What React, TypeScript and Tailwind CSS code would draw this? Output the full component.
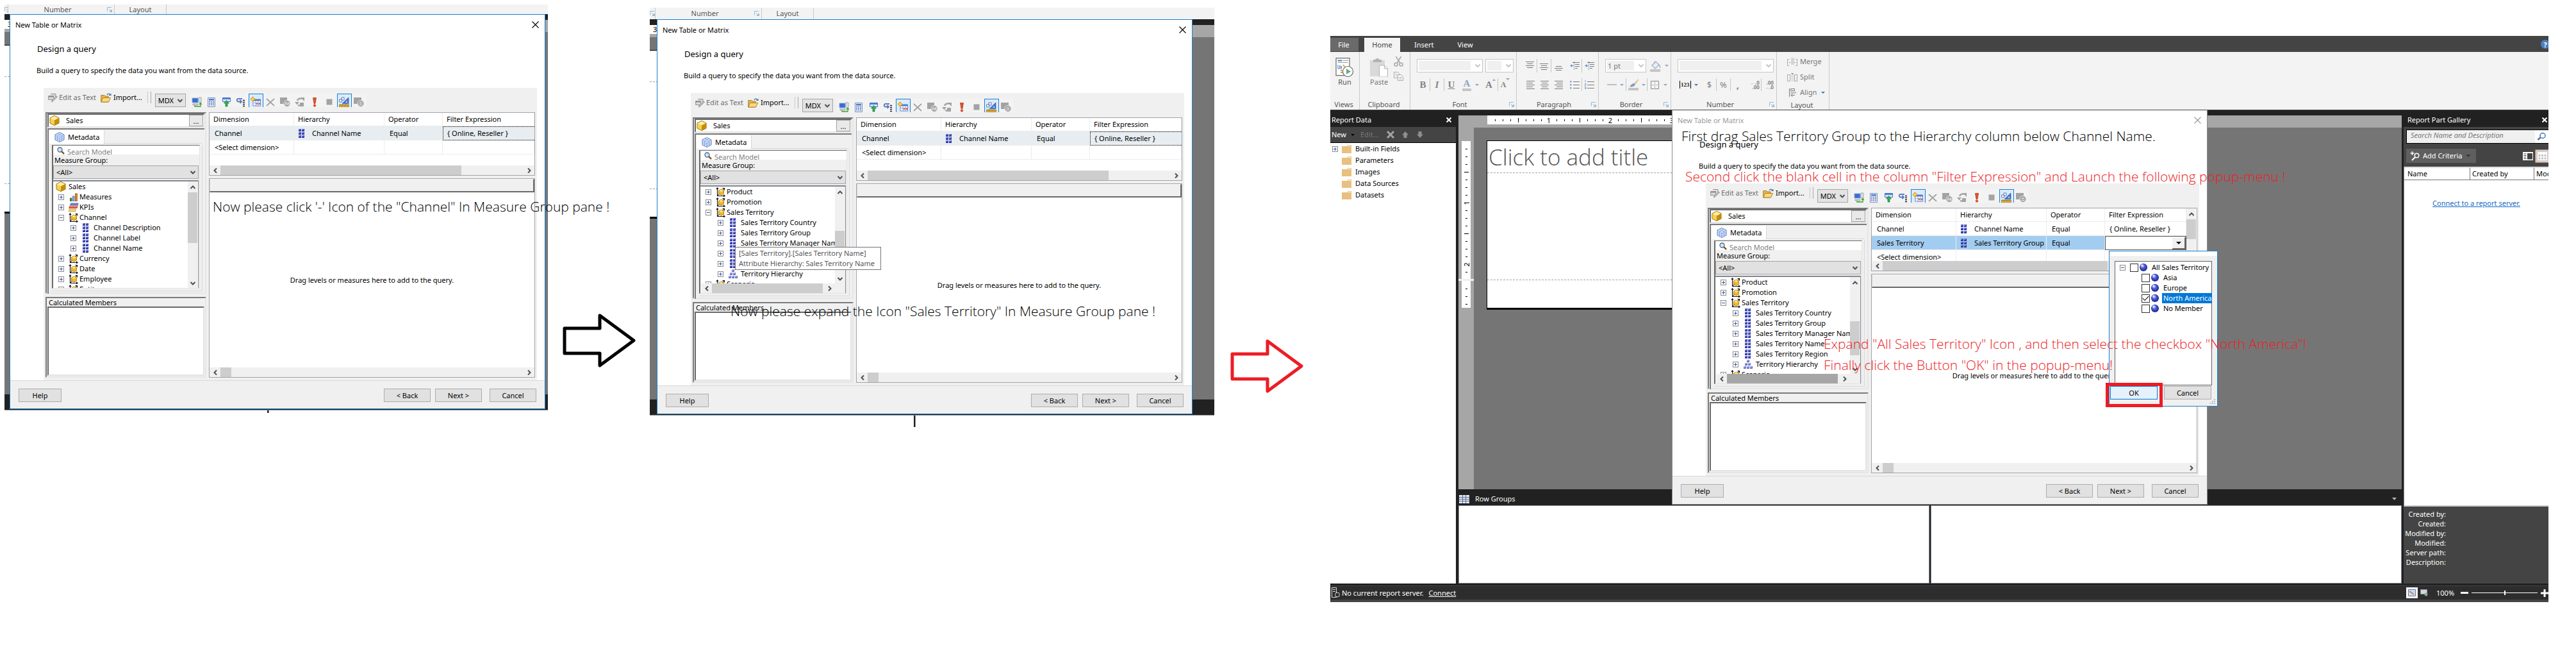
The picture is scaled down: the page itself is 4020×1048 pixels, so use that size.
import type { ReactNode } from "react";
import clsx from "clsx";

/* ---------- small glyphs ---------- */

function Chevron({ dir, className }: { dir: "up" | "down" | "left" | "right"; className?: string }) {
  const d = {
    up: "M1.5 7 5 3.5 8.5 7",
    down: "M1.5 3 5 6.5 8.5 3",
    left: "M7 1.5 3.5 5 7 8.5",
    right: "M3 1.5 6.5 5 3 8.5",
  }[dir];
  return (
    <svg viewBox="0 0 10 10" className={clsx("size-[10px] shrink-0", className)} fill="none" stroke="#505050" strokeWidth="2">
      <path d={d} />
    </svg>
  );
}

function Cube({ className }: { className?: string }) {
  return (
    <svg viewBox="0 0 16 16" className={clsx("size-4 shrink-0", className)}>
      <path d="M8 .5 15 4v8l-7 3.5L1 12V4z" fill="#f0b91e" stroke="#8a6508" />
      <path d="M1.5 4.2 8 7.5v7.4L1.5 11.8z" fill="#f7d250" />
      <path d="M8 1 14.5 4.2 8 7.5 1.5 4.2z" fill="#fff0a6" />
      <path d="M14.5 4.2 8 7.5v7.4l6.5-3.1z" fill="#c88d06" />
    </svg>
  );
}

function MetaCube() {
  return (
    <svg viewBox="0 0 16 16" className="size-4 shrink-0">
      <path d="M8 .5 15 4v8l-7 3.5L1 12V4z" fill="#e6eefc" stroke="#5578c4" />
      <path d="M1 4l7 3.5L15 4M8 7.5v8M1 6.7l7 3.5 7-3.5M1 9.4l7 3.5 7-3.5M4.5 2.3l7 3.5v8M11.5 2.3l-7 3.5v8" fill="none" stroke="#7d9ede" strokeWidth=".9" />
    </svg>
  );
}

function DimensionIcon() {
  return (
    <svg viewBox="0 0 15 15" className="size-[15px] shrink-0">
      <path d="M2.5 1v12.5H14M.8 3 2.5.8 4.2 3M12 11.8l2.2 1.7L12 15M3 13 13 2M10.500 1.500H13.500V4.500" fill="none" stroke="#111" strokeWidth="1.1" />
      <path d="M8.500 3.200 12.500 5v5L8.500 12 4.500 10V5z" fill="#f2bb22" stroke="#a06d05" strokeWidth=".8" />
      <path d="M8.500 3.700 12 5.200 8.500 7 5 5.200z" fill="#ffe98a" />
    </svg>
  );
}

function AttributeIcon() {
  return (
    <svg viewBox="0 0 9 14" className="h-[14px] w-[9px] shrink-0">
      {[0, 5, 10].map((y) => (
        <g key={y}>
          <rect x="0" y={y} width="4" height="4" fill="#2e359e" />
          <rect x="5" y={y} width="4" height="4" fill="#2e359e" />
          <rect x="0" y={y} width="3" height="2" fill="#6d78dc" />
          <rect x="5" y={y} width="3" height="2" fill="#6d78dc" />
        </g>
      ))}
    </svg>
  );
}

function HierarchyIcon() {
  const cells = [[5, 0], [2, 5], [7, 5], [0, 10], [5, 10], [10, 10]];
  return (
    <svg viewBox="0 0 14 14" className="size-[14px] shrink-0">
      {cells.map(([x, y]) => (
        <g key={`${x}-${y}`}>
          <rect x={x} y={y} width="4" height="4" fill="#6a6fc0" />
          <rect x={x} y={y} width="3" height="2" fill="#a7abe8" />
        </g>
      ))}
    </svg>
  );
}

function MeasuresIcon() {
  return (
    <svg viewBox="0 0 14 14" className="size-[14px] shrink-0">
      <rect x="1.500" y="9" width="2.500" height="4.500" fill="#35a629" stroke="#1c6b14" strokeWidth=".8" />
      <rect x="5.500" y="6" width="2.500" height="7.500" fill="#a3a9ea" stroke="#5a60ae" strokeWidth=".8" />
      <rect x="9.500" y="2" width="2.800" height="11.500" fill="#e8892a" stroke="#8e4d08" strokeWidth=".8" />
    </svg>
  );
}

function KpiIcon() {
  return (
    <svg viewBox="0 0 16 15" className="h-[15px] w-4 shrink-0">
      <path d="M3 .5h12.500v2L14 4.500H2z" fill="#5b86d6" />
      <path d="M1.500 4.500H15l-1.500 4.500H0z" fill="#d9533b" />
      <path d="M1.500 5h12v1.500h-12z" fill="#f09a84" />
      <path d="M1 10h10.500L10.500 14H0z" fill="#f0d27c" stroke="#b08a28" strokeWidth=".6" />
    </svg>
  );
}

function MemberBall() {
  return (
    <svg viewBox="0 0 12 12" className="size-3 shrink-0">
      <circle cx="6" cy="6" r="6" fill="#26309c" />
      <circle cx="5.500" cy="5" r="4.600" fill="#4453cf" />
      <circle cx="4.500" cy="3.800" r="2.800" fill="#8e9cf2" />
      <circle cx="4" cy="3.200" r="1.400" fill="#e6eaff" />
    </svg>
  );
}

function Expander({ open, label }: { open?: boolean; label: string }) {
  return (
    <button aria-label={label} className="grid size-[9px] shrink-0 place-items-center border border-[#8c8c8c] bg-white">
      <svg viewBox="0 0 5 5" className="size-[5px]" stroke="#3a57a6" strokeWidth="1">
        <path d={open ? "M0 2.500h5" : "M0 2.500h5M2.500 0v5"} />
      </svg>
    </button>
  );
}

function Launcher() {
  return (
    <svg viewBox="0 0 8 8" className="size-2 shrink-0" fill="none" stroke="#9db8d2" strokeWidth="1">
      <path d="M.5 6.500v-6H7M3 3l3 3" />
      <path d="M4 7.500h3.500V4z" fill="#9db8d2" />
    </svg>
  );
}

function Caret({ className = "text-[#8ca6c8]" }: { className?: string }) {
  return (
    <svg viewBox="0 0 6 3" className={clsx("h-[3px] w-[6px] shrink-0", className)}>
      <path d="M0 0h6L3 3z" fill="currentColor" />
    </svg>
  );
}

/* ---------- query designer toolbar ---------- */

const toolIcons: { name: string; on?: boolean; art: ReactNode }[] = [
  {
    name: "Switch source",
    art: (
      <>
        <path d="M1 2h9v7H1z" fill="#2f6fe0" stroke="#98a3b5" />
        <path d="M2 11h8v2H2zM11 1h4v8h-4z" fill="#dfe5ee" stroke="#8a93a3" strokeWidth=".8" />
        <path d="M5 13v2h9v-5M12 12l2-2.500 2 2.500" fill="none" stroke="#3aa52b" strokeWidth="1.300" />
      </>
    ),
  },
  {
    name: "Add calculated member",
    art: (
      <>
        <path d="M2.500 1.500h11v14h-11z" fill="#e8eefa" stroke="#7b92c0" />
        <path d="M4 3h8v2.500H4z" fill="#4a79d0" />
        <path d="M4 7.500h8M4 10h8M4 12.500h8" stroke="#6d7fb0" strokeWidth="1.500" strokeDasharray="2 1" />
      </>
    ),
  },
  {
    name: "Show empty cells",
    art: (
      <>
        <path d="M2.500 1.500h12v6h-12z" fill="#dbe7fb" stroke="#4473c8" />
        <path d="M3 2h11v2H3z" fill="#4f84da" />
        <path d="M8.500 5.500 12.500 10h-2.500v5H7v-5H4.500z" fill="#2fae56" stroke="#157a35" strokeWidth=".7" />
      </>
    ),
  },
  {
    name: "Auto execute",
    art: (
      <>
        <path d="M10 3H4C1 3 1 7.500 4 7.500h4M6.500 5l2.500 2.500L6.500 10" fill="none" stroke="#5b7dbd" strokeWidth="1.800" />
        <path d="M11 5.500h3M11 8.500h3M11 11.500h3M11 14.500h3" stroke="#222" strokeWidth="1.300" />
      </>
    ),
  },
  {
    name: "Show aggregations",
    on: true,
    art: (
      <>
        <path d="M4 4h11.500v10H4z" fill="#fff" stroke="#6687cc" />
        <path d="M4 4h11.500v2.500H4z" fill="#4a7bdd" />
        <path d="M4 9.500h11.500M8 6.500V14M12 6.500V14" stroke="#8da6da" />
        <path d="M8.500 10h3v2h-3zM12.500 10h3v2h-3z" fill="#e5624a" />
        <path d="M3.500 0v7M0 3.500h7" stroke="#d9a516" strokeWidth="3" />
        <path d="M3.500 1v5M1 3.500h5" stroke="#ffe27a" strokeWidth="1.200" />
      </>
    ),
  },
  {
    name: "Delete",
    art: <path d="M2 3l12 11M14 3 2 14" stroke="#a3a3a3" strokeWidth="1.800" />,
  },
  {
    name: "Query parameters",
    art: (
      <>
        <path d="M0 1h11v10H0z" fill="#a3a3a3" />
        <circle cx="11" cy="10.500" r="5" fill="#a3a3a3" stroke="#f0f0f0" strokeWidth=".8" />
        <path d="M8.500 13v-4h2v3h2V9h1.500v4" fill="none" stroke="#f0f0f0" strokeWidth=".9" />
      </>
    ),
  },
  {
    name: "Refresh",
    art: (
      <>
        <path d="M4 6a5 5 0 0 1 7-3M12 10a5 5 0 0 1-7 3" fill="none" stroke="#a3a3a3" strokeWidth="2.500" />
        <path d="M9 1h6v6zM0 8h7L3.500 12.500zM8 9h6v6H8z" fill="#a3a3a3" />
      </>
    ),
  },
  {
    name: "Run query",
    art: (
      <>
        <path d="M5.500 1.500h5L9 10.500H7z" fill="#e8502d" stroke="#b53a1c" strokeWidth=".8" />
        <circle cx="8" cy="13.500" r="1.800" fill="#e8502d" stroke="#b53a1c" strokeWidth=".6" />
      </>
    ),
  },
  { name: "Cancel query", art: <path d="M3.500 3.500h9v9h-9z" fill="#a3a3a3" /> },
  {
    name: "Design mode",
    on: true,
    art: (
      <>
        <path d="M15 1v9.500H5z" fill="#4472cf" stroke="#274f9f" strokeWidth=".6" />
        <path d="M13 6v3h-3z" fill="#cfe0ff" />
        <path d="M.7 4h4v4h-4zM4 1h4v4H4z" fill="#fff" stroke="#5577b8" />
        <path d="M.5 12h15v3.500H.5z" fill="#eab63c" stroke="#93700f" strokeWidth=".7" />
        <path d="M3 12v2M5.500 12v2M8 12v2M10.500 12v2M13 12v2" stroke="#6b5008" strokeWidth=".8" />
      </>
    ),
  },
  {
    name: "Server aggregates",
    art: (
      <>
        <path d="M0 1h12v10H0z" fill="#a3a3a3" />
        <circle cx="11" cy="10.500" r="5" fill="#a3a3a3" stroke="#f0f0f0" strokeWidth=".8" />
        <path d="M8.500 10h2v-1.500M13.500 10h-2v-1.500M8.500 12.500h5" fill="none" stroke="#f0f0f0" strokeWidth=".9" />
      </>
    ),
  },
];

function Toolbar() {
  return (
    <div className="flex h-[38px] items-start pl-[7px]">
      <div className="flex h-[30px] items-center">
        <button className="flex items-center gap-[2px] text-[#6d6d6d]">
          <svg viewBox="0 0 15 15" className="size-[15px]">
            <path d="M.7 4.500h8v6h-8zM4 1.500h8v5" fill="#dadada" stroke="#8f8f8f" />
            <path d="M.7 5h8v1.500h-8z" fill="#8f8f8f" />
            <path d="M14.500 6 8 12.500l-2.500 1.500L6.500 11 12.500 5z" fill="#c4c4c4" stroke="#808080" strokeWidth=".8" />
          </svg>
          Edit as Text
        </button>
        <button className="ml-[7px] flex items-center gap-[3px]">
          <svg viewBox="0 0 17 15" className="h-[15px] w-[17px]">
            <path d="M.7 3.500h5l1.300 1.500h5v9H.7z" fill="#e8b548" stroke="#9a6d14" strokeWidth=".8" />
            <path d="M3.500 7.500H15.500L12.500 14H.7z" fill="#fbd97a" stroke="#9a6d14" strokeWidth=".8" />
            <path d="M10 3c1-2.500 4-2.500 5 0M13 3.500h3V1" fill="none" stroke="#4c6f9f" strokeWidth="1.100" />
          </svg>
          Import...
        </button>
        <span className="ml-2 h-[18px] w-px bg-[#c9c9c9]" />
        <span className="ml-1 h-[18px] w-px bg-[#a9a9a9]" />
      </div>
      <div className="relative mt-[9px] ml-[6px]">
        <select aria-label="Query language" className="block h-[21px] w-12 appearance-none border border-[#a5a5a5] bg-[#e3e3e3] pl-1">
          <option>MDX</option>
        </select>
        <Chevron dir="down" className="pointer-events-none absolute top-[6px] right-1" />
      </div>
      <div className="mt-[9px] ml-[6px] flex bg-[#f3f3f3]">
        {toolIcons.map((t) => (
          <button
            key={t.name}
            aria-label={t.name}
            className={clsx(
              "flex h-[21px] w-[23px] items-end justify-center",
              t.on && "border border-b-0 border-[#1c7fd6] bg-[#dcebf9]",
            )}
          >
            <svg viewBox="0 0 16 16" className="size-4" fill="none">
              {t.art}
            </svg>
          </button>
        ))}
      </div>
    </div>
  );
}

/* ---------- metadata tree ---------- */

type Node = { text: string; level: 0 | 1 | 2; kind: "cube" | "measures" | "kpi" | "dim" | "attr" | "hier"; open?: boolean };

const kindIcon: Record<Node["kind"], ReactNode> = {
  cube: <Cube />,
  measures: <MeasuresIcon />,
  kpi: <KpiIcon />,
  dim: <DimensionIcon />,
  attr: <AttributeIcon />,
  hier: <HierarchyIcon />,
};

function TreeRow({ node }: { node: Node }) {
  return (
    <li className={clsx("flex h-4 items-center", node.level === 0 && "pl-1", node.level === 1 && "pl-2", node.level === 2 && "pl-[27px]")}>
      {node.level > 0 && <Expander open={node.open} label={`Toggle ${node.text}`} />}
      <span className={clsx("flex shrink-0 items-center", node.level === 0 ? "w-5" : "w-[23px] justify-center pl-[6px]")}>
        {kindIcon[node.kind]}
      </span>
      <span className={clsx("whitespace-nowrap", node.level === 1 && "pl-[1px]", node.level === 2 && "pl-1")}>{node.text}</span>
    </li>
  );
}

function ScrollThumbV({ before, thumb }: { before: string; thumb: string }) {
  return (
    <div className="flex w-[15px] shrink-0 flex-col items-center bg-[#f0f0f0]">
      <span className="grid h-[17px] place-items-center"><Chevron dir="up" /></span>
      <span className={before} />
      <span className={clsx("w-full bg-[#cdcdcd]", thumb)} />
      <span className="flex-1" />
      <span className="grid h-[15px] place-items-center"><Chevron dir="down" /></span>
    </div>
  );
}

function ScrollH({ thumb, color = "bg-[#cdcdcd]", className }: { thumb: string; color?: string; className?: string }) {
  return (
    <div className={clsx("flex h-[15px] shrink-0 items-center bg-[#f0f0f0]", className)}>
      <span className="grid w-[17px] place-items-center"><Chevron dir="left" /></span>
      <span className={clsx("h-full", color, thumb)} />
      <span className="flex-1" />
      <span className="grid w-[17px] place-items-center"><Chevron dir="right" /></span>
    </div>
  );
}

function MetadataPane({ nodes, scrolled, hColor }: { nodes: Node[]; scrolled?: boolean; hColor?: string }) {
  return (
    <section className="flex h-[283px] flex-col border-2 border-t-[#7b7b7b] border-r-[#e6e6e6] border-b-[#e6e6e6] border-l-[#7b7b7b] p-px pt-0">
      <div className="flex h-6 items-center border-t-2 border-r border-b-2 border-l-2 border-t-[#696969] border-r-[#e3e3e3] border-b-[#e3e3e3] border-l-[#696969] bg-white">
        <Cube className="ml-px" />
        <span className="ml-[10px] flex-1">Sales</span>
        <button className="mr-px h-[18px] w-[22px] border border-[#a0a0a0] bg-[#e9e9e9] leading-none">...</button>
      </div>
      <div className="mt-px flex flex-1 flex-col border-t-2 border-l-2 border-[#7b7b7b] p-px pr-0 pb-0">
        <div role="tablist" className="flex h-[21px] pr-1">
          <button role="tab" aria-selected="true" className="flex w-[86px] items-center gap-[5px] border-r border-[#d9d9d9] bg-white pl-2">
            <MetaCube />
            Metadata
          </button>
          <span className="flex-1 border-b border-[#d9d9d9]" />
        </div>
        <div className="mt-[2px] mr-[3px] mb-1 ml-1 flex-1 border-r border-b border-[#d9d9d9] pr-[3px] pb-[3px]">
          <div className="border-t border-r border-b border-l-2 border-t-[#696969] border-r-[#e3e3e3] border-b-[#e3e3e3] border-l-[#696969]">
            <label className="flex h-[14px] items-start overflow-hidden bg-white pl-[6px]">
              <svg viewBox="0 0 12 12" className="mt-[2px] size-3 shrink-0">
                <circle cx="4.500" cy="4.500" r="3.500" fill="#cfe3f7" stroke="#4c6a91" strokeWidth="1.300" />
                <path d="M7 7l4 4" stroke="#7a4b18" strokeWidth="2.400" />
              </svg>
              <input aria-label="Search Model" placeholder="Search Model" className="mt-[2px] ml-1 h-4 w-40 leading-4 placeholder:text-[#808080]" />
            </label>
            <p className="flex h-[17px] items-center pl-[2px]">Measure Group:</p>
            <div className="relative mr-px">
              <select aria-label="Measure Group" className="block h-[21px] w-full appearance-none border border-[#a5a5a5] bg-[#e1e1e1] pl-1">
                <option>{"<All>"}</option>
              </select>
              <Chevron dir="down" className="pointer-events-none absolute top-[6px] right-1" />
            </div>
            <div className="mt-[2px] mr-px flex h-[168px] border-t-2 border-r border-[#828790] bg-white">
              <div className="flex min-w-0 flex-1 flex-col">
                <ul className="min-h-0 flex-1 overflow-hidden">
                  {nodes.map((n) => (
                    <TreeRow key={n.text} node={n} />
                  ))}
                </ul>
                {scrolled && <ScrollH thumb="w-[173px]" color={hColor} className="ml-px" />}
              </div>
              <div className={clsx("flex pr-px", scrolled && "bg-[#f0f0f0] pb-[15px]")}>
                {scrolled ? <ScrollThumbV before="h-[52px]" thumb="h-[53px]" /> : <ScrollThumbV before="h-0" thumb="h-[79px]" />}
              </div>
            </div>
          </div>
        </div>
      </div>
    </section>
  );
}

function CalculatedMembers() {
  return (
    <section className="mt-[5px] flex h-[126px] flex-col border-2 border-t-[#7b7b7b] border-r-[#e6e6e6] border-b-[#e6e6e6] border-l-[#7b7b7b]">
      <h3 className="flex h-[13px] items-center pl-[3px]">Calculated Members</h3>
      <div className="mx-px mb-px flex-1 border-2 border-t-[#696969] border-r-[#e3e3e3] border-b-[#e3e3e3] border-l-[#696969] bg-white" />
    </section>
  );
}

/* ---------- dimension filter grid ---------- */

type FilterRow = { dim: string; hier?: string; op?: string; expr?: string; state?: "soft" | "selected" };

function FilterGrid({ rows, editing }: { rows: FilterRow[]; editing?: boolean }) {
  const cell = "overflow-hidden border-r border-b border-[#ececec] p-0 whitespace-nowrap";
  return (
    <div className="flex h-[99px] flex-col border border-[#a3a3ab] bg-white">
      <div className="flex h-[82px] overflow-hidden">
        <div className="min-w-0 flex-1">
          <table className="w-full table-fixed border-separate border-spacing-0 text-left">
            <colgroup>
              <col className="w-[132px]" />
              <col className="w-[141px]" />
              <col className="w-[91px]" />
              <col />
            </colgroup>
            <thead>
              <tr className="h-[21px]">
                {["Dimension", "Hierarchy", "Operator", "Filter Expression"].map((h) => (
                  <th key={h} className={clsx(cell, "pl-[6px] font-normal")}>{h}</th>
                ))}
              </tr>
            </thead>
            <tbody>
              {rows.map((r) => (
                <tr key={r.dim} className={clsx("h-[22px]", r.state === "soft" && "bg-[#e7edf1]", r.state === "selected" && "bg-[#a3cdf0]")}>
                  <td className={clsx(cell, "pl-2")}>{r.dim}</td>
                  <td className={cell}>
                    {r.hier && (
                      <span className="flex items-center gap-3 pl-[7px]">
                        <AttributeIcon />
                        {r.hier}
                      </span>
                    )}
                  </td>
                  <td className={clsx(cell, "pl-2")}>{r.op}</td>
                  {r.state === "selected" ? (
                    <td className="p-0">
                      <div className="flex h-[22px] border border-[#555] bg-white">
                        <input aria-label="Filter Expression" className="min-w-0 flex-1 px-1" />
                        <button aria-label="Open member list" className="grid w-[22px] place-items-center border-2 border-t-[#f8f8f8] border-r-[#696969] border-b-[#696969] border-l-[#f8f8f8] bg-[#f0f0f0]">
                          <svg viewBox="0 0 8 4" className="h-1 w-2"><path d="M0 0h8L4 4z" /></svg>
                        </button>
                      </div>
                    </td>
                  ) : (
                    <td className={clsx(r.state === "soft" ? "overflow-hidden border border-r-0 border-dotted border-black p-0 pl-[6px] whitespace-nowrap" : clsx(cell, "pl-[7px]"))}>
                      {r.expr}
                    </td>
                  )}
                </tr>
              ))}
            </tbody>
          </table>
        </div>
        {editing && <div className="flex pr-px"><ScrollThumbV before="h-0" thumb="h-[31px]" /></div>}
      </div>
      <ScrollH thumb={editing ? "w-[351px]" : "w-[376px]"} />
    </div>
  );
}

/* ---------- wizard dialog ---------- */

function DialogButton({ children, className }: { children: ReactNode; className?: string }) {
  return <button className={clsx("h-[21px] border border-[#adadad] bg-[#e1e1e1]", className)}>{children}</button>;
}

function WizardDialog({
  nodes,
  rows,
  scrolled,
  editing,
}: {
  nodes: Node[];
  rows: FilterRow[];
  scrolled?: boolean;
  editing?: boolean;
}) {
  return (
    <section
      role="dialog"
      aria-label="New Table or Matrix"
      className={clsx("border bg-white text-black", editing ? "border-[#8a8a8a] border-t-[#444]" : "border-[#1c80cc]")}
    >
      <header className={clsx("flex h-[31px] items-center justify-between pr-[9px] pl-2", editing && "text-[#999]")}>
        <h2>New Table or Matrix</h2>
        <button aria-label="Close">
          <svg viewBox="0 0 11 11" className="size-[11px]" fill="none" stroke="currentColor" strokeWidth="1.100">
            <path d="M.5.5l10 10M10.500.5l-10 10" />
          </svg>
        </button>
      </header>
      <h3 className="flex h-[44px] items-center pl-[42px] text-[13px]">Design a query</h3>
      <p className="flex h-6 items-center pl-[41px]">Build a query to specify the data you want from the data source.</p>
      <div className="mt-[15px] mr-3 ml-[52px] bg-[#f0f0f0]">
        <Toolbar />
        <div className="flex gap-1 px-[3px] pb-1">
          <div className="w-[251px] shrink-0">
            <MetadataPane nodes={nodes} scrolled={scrolled} hColor={editing ? "bg-[#a6a6a6]" : undefined} />
            <CalculatedMembers />
          </div>
          <div className="flex min-w-0 flex-1 flex-col gap-1">
            <FilterGrid rows={rows} editing={editing} />
            <div className="flex h-[311px] flex-col border border-[#a3a3ab] bg-white">
              <div className="h-[21px] border-t border-r-2 border-b-2 border-l border-t-[#f8f8f8] border-r-[#696969] border-b-[#696969] border-l-[#d0d0d0] bg-[#f0f0f0]" />
              <p className="flex flex-1 items-center justify-center">Drag levels or measures here to add to the query.</p>
              <ScrollH thumb="w-[17px]" />
            </div>
          </div>
        </div>
      </div>
      <footer className="flex h-[44px] border-t border-[#d9d9d9] bg-[#f0f0f0] px-[13px] pt-3">
        <DialogButton className="mr-auto w-[67px]">Help</DialogButton>
        <DialogButton className="w-[73px]">{"< Back"}</DialogButton>
        <DialogButton className="ml-[7px] w-[73px]">{"Next >"}</DialogButton>
        <DialogButton className="ml-3 w-[73px]">Cancel</DialogButton>
      </footer>
    </section>
  );
}

/* ---------- slice of the editor visible behind steps one and two ---------- */

function Backdrop({ ribbon, lead }: { ribbon: string; lead: string }) {
  return (
    <div className="absolute inset-0 flex flex-col">
      <div className={clsx("flex items-center bg-[#f3f3f3] text-[#555]", ribbon)}>
        <span className={clsx("flex h-full items-center overflow-hidden border-r border-[#c9c9c9]", lead)}><Launcher /></span>
        <span className="flex h-full w-[166px] items-center border-r border-[#c9c9c9] pr-[3px]">
          <span className="flex-1 text-center">Number</span>
          <Launcher />
        </span>
        <span className="flex h-full w-[81px] items-center justify-center border-r border-[#c9c9c9]">Layout</span>
      </div>
      <div className="h-[9px] bg-[#212121]" />
      <div className="flex flex-1">
        <div className="flex flex-1 flex-col">
          <div className="h-[14px] overflow-hidden bg-white pl-[5px] leading-[14px]">3</div>
          <div className="h-[5px] bg-[#a6a6a6]" />
          <div className="h-5 bg-[#757575]" />
          <div className="h-[50px] border-t border-b border-t-black border-b-[#a0a0a0] bg-white [border-bottom-style:dashed]" />
          <div className="h-[167px] border-b border-dashed border-[#a0a0a0] bg-white" />
          <div className="h-[43px] bg-white" />
          <div className="h-[3px] bg-black" />
          <div className="flex-1 bg-[#757575]" />
        </div>
        <div className="flex flex-1 flex-col">
          <div className="h-[19px] bg-[#a6a6a6]" />
          <div className="flex-1 bg-[#757575]" />
        </div>
      </div>
      <div className="h-[25px] border-b border-[#8a8a8a] bg-[#212121]" />
    </div>
  );
}

function Annotation({ children, className }: { children: ReactNode; className: string }) {
  return (
    <p className={clsx("absolute z-20 font-['Open_Sans',sans-serif] text-[21px] leading-7 font-light whitespace-nowrap", className)}>
      {children}
    </p>
  );
}

function StepArrow({ className }: { className: string }) {
  return (
    <svg viewBox="0 0 114 84" className={clsx("h-[84px] w-[114px]", className)} fill="none" stroke="currentColor" strokeWidth="5" strokeLinejoin="round">
      <path d="M3 23h55V3l53 39-53 39V62H3z" />
    </svg>
  );
}

/* ---------- Report Builder window ---------- */

function Combo({ label, className, value = "" }: { label: string; className: string; value?: string }) {
  return (
    <span className={clsx("relative block", className)}>
      <select aria-label={label} className="block h-[21px] w-full appearance-none border border-[#c6c6c6] bg-[linear-gradient(#f0f0f0,#f0f0f0)] bg-[length:calc(100%-20px)_15px] bg-[position:2px_2px] bg-no-repeat bg-white pl-[3px] text-[#777]">
        <option>{value}</option>
      </select>
      <svg viewBox="0 0 8 5" className="pointer-events-none absolute top-2 right-1 h-[5px] w-2" fill="none" stroke="#a9a9a9" strokeWidth="1.200">
        <path d="M.5.5 4 4.200 7.500.5" />
      </svg>
    </span>
  );
}

function RibbonGroup({ label, width, launcher, children }: { label: string; width: string; launcher?: boolean; children: ReactNode }) {
  return (
    <section className={clsx("flex shrink-0 flex-col border-r border-[#c9c9c9]", width)}>
      <div className="flex-1">{children}</div>
      <h3 className="flex h-4 items-center pr-[3px]">
        <span className="flex-1 text-center">{label}</span>
        {launcher && <Launcher />}
      </h3>
    </section>
  );
}

function RibbonCell({ label, sep, width = "w-[22px]", children }: { label: string; sep?: boolean; width?: string; children: ReactNode }) {
  return (
    <button aria-label={label} className={clsx("flex h-full shrink-0 items-center justify-center text-[#848484]", width, sep && "border-r border-[#c6c6c6]")}>
      {children}
    </button>
  );
}

function Lines({ rows, bullets }: { rows: [number, number, number][]; bullets?: "dot" | "num" | "out" | "in" }) {
  return (
    <svg viewBox="0 0 15 14" className="h-[14px] w-[15px]">
      {rows.map(([x, y, w]) => (
        <rect key={y} x={x} y={y} width={w} height="1" fill="#7a7a7a" />
      ))}
      {bullets === "dot" && <path d="M0 1h2.500v2.500H0zM0 6h2.500v2.500H0zM0 11h2.500v2.500H0z" fill="#8ca6c8" />}
      {bullets === "num" && <path d="M1 0v3.500M0 5.500h2v1.500H0v1.500h2M0 10.500h2v3H0M0 12h2" fill="none" stroke="#8ca6c8" />}
      {bullets === "out" && <path d="M0 6.500 3.500 4v2h2v1h-2v2z" fill="#6f94c4" />}
      {bullets === "in" && <path d="M5.500 6.500 2 4v2H0v1h2v2z" fill="#6f94c4" />}
      {(bullets === "out" || bullets === "in") && <path d="M6.500 0v14" stroke="#7a7a7a" strokeDasharray="1 1" />}
    </svg>
  );
}

function Ribbon() {
  const full: [number, number, number][] = [[1, 1, 13], [1, 4, 10], [1, 7, 13], [1, 10, 10], [1, 13, 13]];
  return (
    <div className="flex h-[90px] bg-[#f3f3f3] text-[#555]">
      <RibbonGroup label="Views" width="w-[46px]">
        <button className="mx-auto flex flex-col items-center pt-[9px]">
          <svg viewBox="0 0 29 30" className="h-[30px] w-[29px]" fill="none">
            <path d="M1 .7h21v27H1z" fill="#fff" stroke="#6a6a6a" strokeWidth="1.200" />
            <path d="M3.500 4.500h7" stroke="#4a82bd" strokeWidth="2" />
            <path d="M12 4.500h8M3.500 7.500h16" stroke="#9a9a9a" />
            <path d="M4 11v6h6" stroke="#4a82bd" />
            <path d="M7 12v4M9.500 13v3" stroke="#4a82bd" strokeWidth="1.500" />
            <path d="M12 11l4 5M8 20h3M8 23h4" stroke="#e3a04a" strokeWidth="2" />
            <circle cx="19.500" cy="21.500" r="8" fill="#fff" stroke="#6a6a6a" strokeWidth="1.200" />
            <path d="M17 17l7 4.500-7 4.500z" fill="#6aa790" />
          </svg>
          Run
        </button>
      </RibbonGroup>
      <RibbonGroup label="Clipboard" width="w-[79px]">
        <div className="flex gap-[9px] pt-[7px] pl-4">
          <button className="flex flex-col items-center pt-[2px] text-[#777]">
            <svg viewBox="0 0 28 30" className="h-[30px] w-7" fill="none">
              <path d="M0 4h23v25H0z" fill="#d9d9d9" />
              <path d="M5 3h3a4 4 0 0 1 7 0h3v4H5z" fill="#b3b3b3" />
              <path d="M14.500 12h8l5 5v13h-13z" fill="#fff" stroke="#b3b3b3" />
              <path d="M22.500 12v5h5" stroke="#b3b3b3" />
            </svg>
            Paste
          </button>
          <div className="flex flex-col gap-2">
            <button aria-label="Cut">
              <svg viewBox="0 0 15 16" className="h-4 w-[15px]" fill="none" stroke="#a9a9a9" strokeWidth="1.600">
                <path d="M3.500 0 9.500 10M11.500 0l-6 10" />
                <circle cx="3.500" cy="12.500" r="2.500" />
                <circle cx="11.500" cy="12.500" r="2.500" />
              </svg>
            </button>
            <button aria-label="Copy">
              <svg viewBox="0 0 15 14" className="h-[14px] w-[15px]" fill="#f8f8f8" stroke="#a9a9a9">
                <path d="M.5.5h6l2 2v7h-8z" />
                <path d="M6.500 4.500h5l3 3v6h-8z" />
                <path d="M8.500 8.500h4M8.500 11h4M2.500 3.500h3M2.500 6h3" />
              </svg>
            </button>
          </div>
        </div>
      </RibbonGroup>
      <RibbonGroup label="Font" width="w-[166px]" launcher>
        <div className="flex gap-1 pt-[11px] pl-[10px]">
          <Combo label="Font family" className="w-[103px]" />
          <Combo label="Font size" className="w-[44px]" />
        </div>
        <div className="mt-[9px] flex h-5 items-center pl-[9px] font-['Liberation_Serif'] text-[15px] font-bold">
          <RibbonCell label="Bold" sep>B</RibbonCell>
          <RibbonCell label="Italic" sep><i>I</i></RibbonCell>
          <RibbonCell label="Underline"><span className="underline">U</span></RibbonCell>
          <RibbonCell label="Font color" width="w-[26px]">
            <span className="border-b-4 border-[#c4c4c4] px-[2px] leading-4 text-[#8fa3c6]">A</span>
          </RibbonCell>
          <Caret className="text-[#8ca6c8]" />
          <RibbonCell label="Grow font" width="ml-[7px] w-[23px]" sep>
            A<span className="self-start"><svg viewBox="0 0 5 3" className="mt-px h-[3px] w-[5px]"><path d="M0 3h5L2.500 0z" fill="#8ca6c8" /></svg></span>
          </RibbonCell>
          <RibbonCell label="Shrink font">
            <span className="text-xs">A</span><span className="self-start"><Caret /></span>
          </RibbonCell>
        </div>
      </RibbonGroup>
      <RibbonGroup label="Paragraph" width="w-[128px]" launcher>
        <div className="mt-[11px] flex h-[21px] items-center pl-[10px]">
          <RibbonCell label="Top" sep><Lines rows={[[1, 0, 13], [3, 3, 9], [1, 6, 13], [3, 9, 9]]} /></RibbonCell>
          <RibbonCell label="Middle" sep><Lines rows={[[1, 3, 13], [3, 6, 9], [1, 9, 13], [3, 12, 9]]} /></RibbonCell>
          <RibbonCell label="Bottom"><Lines rows={[[3, 7, 9], [1, 10, 13], [3, 13, 9]]} /></RibbonCell>
          <span className="w-1" />
          <RibbonCell label="Decrease indent" sep><Lines rows={[[4, 1, 11], [8, 4, 7], [8, 7, 7], [8, 10, 4]]} bullets="out" /></RibbonCell>
          <RibbonCell label="Increase indent"><Lines rows={[[4, 1, 11], [8, 4, 7], [8, 7, 7], [8, 10, 4]]} bullets="in" /></RibbonCell>
        </div>
        <div className="mt-[9px] flex h-5 items-center pl-[10px]">
          <RibbonCell label="Align left"><Lines rows={full} /></RibbonCell>
          <RibbonCell label="Center"><Lines rows={full.map(([, y, w]) => [w === 13 ? 1 : 3, y, w === 13 ? 13 : 9])} /></RibbonCell>
          <RibbonCell label="Align right"><Lines rows={full.map(([, y, w]) => [14 - w, y, w])} /></RibbonCell>
          <span className="w-1" />
          <RibbonCell label="Bullets" sep><Lines rows={[[5, 2, 10], [5, 7, 10], [5, 12, 10]]} bullets="dot" /></RibbonCell>
          <RibbonCell label="Numbering"><Lines rows={[[4, 2, 11], [4, 7, 11], [4, 12, 11]]} bullets="num" /></RibbonCell>
        </div>
      </RibbonGroup>
      <RibbonGroup label="Border" width="w-[113px]" launcher>
        <div className="flex items-center pt-[11px] pl-[10px]">
          <Combo label="Border width" className="w-16" value="1 pt" />
          <RibbonCell label="Fill" width="ml-[3px] w-[22px]">
            <svg viewBox="0 0 17 18" className="h-[18px] w-[17px]" fill="none">
              <path d="M3 8l6-6 5 5-6 6z" fill="#e9eef5" stroke="#9aabc4" strokeWidth="1.200" />
              <path d="M7 5V1.500M14 7c2 2 2 4 1 5" stroke="#9aabc4" strokeWidth="1.200" />
              <path d="M0 14h16v4H0z" fill="#c4c4c4" />
            </svg>
          </RibbonCell>
          <span className="ml-1"><Caret /></span>
        </div>
        <div className="mt-[9px] flex h-5 items-center pl-[9px]">
          <RibbonCell label="Border style" width="w-[22px]"><svg viewBox="0 0 15 2" className="h-[2px] w-[15px]"><path d="M0 1h15" stroke="#8a8a8a" /></svg></RibbonCell>
          <span className="flex h-full w-3 items-center border-r border-[#c6c6c6] pl-[2px]"><Caret /></span>
          <RibbonCell label="Border color">
            <svg viewBox="0 0 17 18" className="h-[18px] w-[17px]" fill="none">
              <path d="M16 0 9 7l2 2 5-7z" fill="#dcc28c" />
              <path d="M9 7c-3 0-5 3-7 5 3 1 8 0 9-3z" fill="#7e9cc8" />
              <path d="M0 14h16v4H0z" fill="#c4c4c4" />
            </svg>
          </RibbonCell>
          <span className="flex h-full w-[11px] items-center border-r border-[#c6c6c6] pl-[2px]"><Caret /></span>
          <RibbonCell label="Borders">
            <svg viewBox="0 0 13 13" className="size-[13px]" fill="none" stroke="#8a8a8a">
              <path d="M.5.5h12v12H.5z" />
              <path d="M6.500 2v10M2 6.500h10" strokeDasharray="1 1" />
            </svg>
          </RibbonCell>
          <span className="ml-[3px]"><Caret /></span>
        </div>
      </RibbonGroup>
      <RibbonGroup label="Number" width="w-[165px]" launcher>
        <div className="pt-[11px] pl-[10px]">
          <Combo label="Number format" className="w-[150px]" />
        </div>
        <div className="mt-[9px] flex h-5 items-center pl-[13px]">
          <span className="flex h-3 items-center border-x border-black px-[1px] font-['Liberation_Serif'] text-[9px] font-bold text-[#222]">123</span>
          <span className="ml-[5px]"><Caret className="text-[#3f76b8]" /></span>
          <span className="w-2" />
          <RibbonCell label="Currency" sep><span className="text-[13px]">$</span></RibbonCell>
          <RibbonCell label="Percent" sep><span className="text-[13px]">%</span></RibbonCell>
          <RibbonCell label="Thousands"><span className="text-[15px] font-bold">,</span></RibbonCell>
          <RibbonCell label="Increase decimals" width="ml-[6px] w-5" sep>
            <span className="text-right text-[8px] leading-[7px] font-bold"><span className="text-[#7aa0d0]">←</span>.0<br />.00</span>
          </RibbonCell>
          <RibbonCell label="Decrease decimals" width="w-[23px]">
            <span className="text-right text-[8px] leading-[7px] font-bold">.00<br /><span className="text-[#7aa0d0]">→</span>.0</span>
          </RibbonCell>
        </div>
      </RibbonGroup>
      <RibbonGroup label="Layout" width="w-[82px]">
        <div className="flex flex-col pt-[3px] pl-4 text-[#777]">
          <button className="flex h-6 items-center gap-1">
            <svg viewBox="0 0 16 13" className="h-[13px] w-4" fill="none" stroke="#a9a9a9"><path d="M3 2.500H.5v10H3M13 2.500h2.500v10H13M2.500 7.500h3M13.500 7.500h-3" /><path d="M6 0h5v11H6z" fill="#d5d5d5" stroke="none" /></svg>
            Merge
          </button>
          <button className="flex h-6 items-center gap-1">
            <svg viewBox="0 0 16 13" className="h-[13px] w-4" fill="none" stroke="#a9a9a9"><path d="M.5 2.500h4v10h-4zM11.500 2.500h4v10h-4z" /><path d="M6 2h5v11H6z" fill="#e2e2e2" stroke="none" /><path d="M6 0h4L8 2.500z" fill="#8a8a8a" stroke="none" /></svg>
            Split
          </button>
          <button className="flex h-6 items-center gap-1">
            <svg viewBox="0 0 16 13" className="h-[13px] w-4" fill="none" stroke="#7a7a7a"><path d="M3.500 0v13M5.500.5h6v3h-6zM6 10.500h6M8.500 8 6 10.500 8.500 13" /><path d="M5 5h9v3H5z" fill="#c4c4c4" stroke="none" /></svg>
            Align
            <Caret className="ml-[3px] text-[#3f76b8]" />
          </button>
        </div>
      </RibbonGroup>
    </div>
  );
}

function RulerTicks({ count, vertical }: { count: number; vertical?: boolean }) {
  return (
    <div className={clsx("flex", vertical ? "w-full flex-col pt-[6px]" : "h-full pl-[6px]")}>
      {Array.from({ length: count }, (_, i) => i + 1).map((k) => (
        <span key={k} className={clsx("flex shrink-0 items-center justify-center", vertical ? "h-3 w-full" : "h-full w-3")}>
          {k % 8 === 0 ? (
            <span className={clsx("text-[11px] leading-none", vertical && "-rotate-90")}>{k / 8}</span>
          ) : (
            <span
              className={clsx(
                "bg-black",
                vertical ? (k % 4 === 0 ? "h-px w-[7px]" : "h-px w-[3px]") : k % 4 === 0 ? "h-[7px] w-px" : "h-[3px] w-px",
              )}
            />
          )}
        </span>
      ))}
    </div>
  );
}

function ReportDataPanel() {
  return (
    <aside className="flex w-[196px] shrink-0 flex-col bg-white text-black">
      <h2 className="flex h-[26px] items-center justify-between bg-[#212121] pt-1 pr-[7px] pl-[2px] text-white">
        Report Data
        <button aria-label="Close Report Data">
          <svg viewBox="0 0 8 8" className="size-2" stroke="#fff" strokeWidth="2"><path d="M.5.5l7 7M7.500.5l-7 7" /></svg>
        </button>
      </h2>
      <div className="flex h-[25px] items-center border-b border-black bg-[#444] pl-[2px] text-white">
        <button className="flex items-center gap-[7px]">New <Caret className="text-black" /></button>
        <button className="ml-[9px] text-[#777]">Edit...</button>
        <button aria-label="Delete" className="ml-3">
          <svg viewBox="0 0 12 12" className="size-3" stroke="#a3a3a3" strokeWidth="3"><path d="M1 1l10 10M11 1 1 11" /></svg>
        </button>
        <button aria-label="Move up" className="ml-3">
          <svg viewBox="0 0 10 10" className="size-[10px]" fill="#8f8f8f"><path d="M5 0l5 5.500H7.500V10h-5V5.500H0z" /></svg>
        </button>
        <button aria-label="Move down" className="ml-[13px]">
          <svg viewBox="0 0 10 10" className="size-[10px]" fill="#8f8f8f"><path d="M5 10l5-5.500H7.500V0h-5v4.500H0z" /></svg>
        </button>
      </div>
      <ul>
        {["Built-in Fields", "Parameters", "Images", "Data Sources", "Datasets"].map((t, i) => (
          <li key={t} className="flex h-[18px] items-center">
            <span className="w-[18px] pl-[3px]">{i === 0 && <Expander label="Expand Built-in Fields" />}</span>
            <svg viewBox="0 0 15 13" className="h-[13px] w-[15px]">
              <path d="M0 2h8l1.500-2H15v13H0z" fill="#e9c07f" />
              <path d="M9.500 1.500H14" stroke="#fff" />
            </svg>
            <span className="ml-[6px]">{t}</span>
          </li>
        ))}
      </ul>
    </aside>
  );
}

function DesignSurface() {
  return (
    <main className="flex min-w-0 flex-1 flex-col border-l-4 border-[#212121] pt-2">
      <div className="flex h-[583px] flex-col bg-[#757575]">
        <div className="h-[19px] bg-[#a6a6a6] pl-[45px]">
          <div className="h-[14px] w-[1000px] bg-white text-black"><RulerTicks count={40} /></div>
        </div>
        <div className="flex flex-1">
          <div className="flex w-6 flex-col bg-[#a6a6a6] pt-[21px]">
            <div className="mx-[5px] h-[215px] overflow-hidden bg-white text-black"><RulerTicks count={17} vertical /></div>
            <div className="h-[3px] bg-[#f0f0f0]" />
            <div className="mx-[5px] h-[42px] bg-white"><RulerTicks count={3} vertical /></div>
          </div>
          <div className="mt-5 ml-5 h-[264px] w-[1000px] border-t border-b-[3px] border-l border-black bg-white">
            <p className="flex h-[50px] items-center border-b border-dashed border-[#a0a0a0] pl-[2px] font-['Open_Sans',sans-serif] text-[35px] font-light text-[#555]">
              Click to add title
            </p>
            <div className="h-[167px] border-b border-dashed border-[#a0a0a0]" />
          </div>
        </div>
      </div>
      <div className="flex h-6 items-center justify-between bg-[#212121] pt-[6px] pr-2 pl-[1px] text-white">
        <span className="flex items-center gap-[9px]">
          <svg viewBox="0 0 16 13" className="h-[13px] w-4">
            <path d="M0 0h16v13H0z" fill="#dfe6f0" />
            <path d="M0 3.500h16M0 6.500h16M0 9.500h16M5.500 0v13M10.500 0v13" stroke="#5a6f92" />
          </svg>
          Row Groups
        </span>
        <svg viewBox="0 0 7 4" className="h-1 w-[7px]"><path d="M0 0h7L3.500 4z" fill="#b9b9b9" /></svg>
      </div>
      <div className="flex h-[123px] gap-[2px] bg-[#212121] pt-px">
        <div className="flex-1 border border-[#828790] bg-white" />
        <div className="flex-1 border border-[#828790] bg-white" />
      </div>
    </main>
  );
}

function PartGallery() {
  return (
    <aside className="flex w-[229px] shrink-0 flex-col border-l-[3px] border-[#212121] bg-white">
      <h2 className="flex h-[26px] items-center justify-between bg-[#212121] pt-1 pr-[2px] pl-[6px] text-white">
        Report Part Gallery
        <button aria-label="Close Report Part Gallery">
          <svg viewBox="0 0 8 8" className="size-2" stroke="#fff" strokeWidth="2"><path d="M.5.5l7 7M7.500.5l-7 7" /></svg>
        </button>
      </h2>
      <div className="h-[62px] bg-[#444] pl-1">
        <div className="flex h-[26px] items-end">
          <label className="flex h-[22px] w-full items-center border border-r-0 border-black bg-[#f0f0f0]">
            <input aria-label="Search Name and Description" placeholder="Search Name and Description" className="min-w-0 flex-1 pb-1 pl-[6px] italic placeholder:text-[#777]" />
            <svg viewBox="0 0 21 20" className="h-5 w-[21px] bg-white" fill="none" stroke="#3f76b8">
              <circle cx="12" cy="8.500" r="4" strokeWidth="1.500" />
              <path d="M8.500 11.500 4.500 15" strokeWidth="2.500" />
            </svg>
          </label>
        </div>
        <div className="mt-2 flex items-center">
          <button className="flex h-[22px] w-[109px] shrink-0 items-center bg-[#5f5f5f] pl-[6px] whitespace-nowrap text-white">
            <svg viewBox="0 0 15 15" className="size-[15px] shrink-0" fill="none" stroke="#fff">
              <path d="M3.500 0v6M.5 3h6" strokeWidth="1.500" />
              <circle cx="10.500" cy="6.500" r="3.300" strokeWidth="1.500" />
              <path d="M8 9l-5 5" strokeWidth="2.200" />
            </svg>
            <span className="ml-[5px]">Add Criteria</span>
            <svg viewBox="0 0 8 4" className="ml-[6px] h-1 w-2 shrink-0"><path d="M0 0h8L4 4z" fill="#3a3a3a" /></svg>
          </button>
          <button aria-label="Thumbnails" className="ml-[73px] shrink-0">
            <svg viewBox="0 0 16 13" className="h-[13px] w-4"><path d="M0 0h16v13H0z" fill="#fff" /><path d="M7 2h8v9.500H7z" fill="#444" /><path d="M1.500 3h4M1.500 5.500h4M1.500 8h4M1.500 10.500h4" stroke="#444" /></svg>
          </button>
          <button aria-label="Details" className="ml-[3px] grid h-[21px] w-[21px] shrink-0 place-items-center rounded-l-[2px] border border-r-0 border-[#b98a6a] bg-[#d0cecd]">
            <svg viewBox="0 0 15 13" className="h-[13px] w-[15px]"><path d="M0 0h15v13H0z" fill="#fff" /><path d="M1.500 4h3v3h-3zM6 4h3v3H6zM10.500 4h3v3h-3zM1.500 8.500h3v3h-3zM6 8.500h3v3H6zM10.500 8.500h3v3h-3z" fill="#c4c4c4" /></svg>
          </button>
        </div>
      </div>
      <div className="border-l border-[#828790] text-black">
        <table className="mt-px w-full table-fixed border-separate border-spacing-0 text-left">
          <thead>
            <tr className="h-5">
              <th className="w-[103px] border-y border-r border-[#777] border-t-[#ccc] p-0 pl-[5px] font-normal">Name</th>
              <th className="w-[100px] border-y border-r border-[#777] border-t-[#ccc] p-0 pl-[3px] font-normal">Created by</th>
              <th className="overflow-hidden border-y border-[#777] border-t-[#ccc] p-0 pl-[3px] font-normal whitespace-nowrap">Modified by</th>
            </tr>
          </thead>
        </table>
      </div>
      <div className="flex-1 border-b-2 border-l border-[#828790] border-b-[#c9ccd2] pt-[28px] text-center">
        <a href="#connect" className="text-[#1569c7] underline">Connect to a report server.</a>
      </div>
      <dl className="h-[120px] bg-[#444] pt-1 text-white">
        {["Created by:", "Created:", "Modified by:", "Modified:", "Server path:", "Description:"].map((t) => (
          <dt key={t} className="w-[66px] text-right leading-[15px] whitespace-nowrap">{t}</dt>
        ))}
      </dl>
    </aside>
  );
}

function StatusBar() {
  return (
    <footer className="border-t-[3px] border-[#212121] text-white">
      <div className="flex h-[26px] items-center border-t border-b-4 border-[#444] bg-[#2d2d2d]">
        <svg viewBox="0 0 13 17" className="ml-[2px] h-[17px] w-[13px]" fill="none" stroke="#ddd">
          <path d="M.5.5h7v15h-7zM2 3.500h4M2 6.500h4" />
          <circle cx="9" cy="11.500" r="3.500" fill="#2d2d2d" />
        </svg>
        <span className="ml-[3px]">No current report server.</span>
        <a href="#connect" className="ml-2 underline">Connect</a>
        <span className="flex-1" />
        <button aria-label="Design view" className="grid h-[17px] w-[18px] place-items-center bg-white">
          <svg viewBox="0 0 12 11" className="h-[11px] w-3"><path d="M.5.5h11v10H.5z" fill="#cfdcf0" stroke="#5878ad" /><path d="M2 3l7 5" stroke="#d2803a" strokeWidth="2" /></svg>
        </button>
        <button aria-label="Preview" className="grid h-[17px] w-[19px] place-items-center">
          <svg viewBox="0 0 12 11" className="h-[11px] w-3"><path d="M.5.5h10v7H.5z" fill="#cfd6df" stroke="#8a8f99" /><circle cx="9" cy="8" r="2.500" fill="#7fae96" /></svg>
        </button>
        <span className="ml-[10px] w-[38px]">100%</span>
        <button aria-label="Zoom out" className="h-[3px] w-3 bg-white" />
        <input
          type="range"
          aria-label="Zoom"
          defaultValue={50}
          className="ml-[5px] h-3 w-[103px] appearance-none bg-[linear-gradient(#fff,#fff)] bg-[length:100%_1px] bg-center bg-no-repeat [&::-webkit-slider-thumb]:h-[7px] [&::-webkit-slider-thumb]:w-[2px] [&::-webkit-slider-thumb]:appearance-none [&::-webkit-slider-thumb]:bg-white"
        />
        <button aria-label="Zoom in" className="ml-[5px]">
          <svg viewBox="0 0 12 12" className="size-3" stroke="#fff" strokeWidth="3"><path d="M6 0v12M0 6h12" /></svg>
        </button>
      </div>
    </footer>
  );
}

function ReportBuilder() {
  return (
    <div className="flex flex-col">
      <nav className="flex h-[25px] items-end bg-[#444] text-white">
        <button className="mb-[1px] h-[21px] w-11 bg-[#6a6a6a] pr-[2px]">File</button>
        <button className="ml-[9px] h-[22px] w-14 bg-[#f3f3f3] text-[#444]">Home</button>
        <button className="h-[22px] pl-[22px]">Insert</button>
        <button className="h-[22px] pl-[37px]">View</button>
        <span className="flex-1" />
        <span className="h-full w-3 overflow-hidden pt-[6px]">
          <span className="grid size-[14px] place-items-center rounded-full bg-[#4a7fc1] text-[11px] leading-none font-bold">?</span>
        </span>
      </nav>
      <Ribbon />
      <div className="flex border-t border-[#444] bg-[#212121]">
        <ReportDataPanel />
        <DesignSurface />
        <PartGallery />
      </div>
      <StatusBar />
    </div>
  );
}

function MemberPopup() {
  const members = ["Asia", "Europe", "North America", "No Member"];
  const box = "col-start-1 row-start-1 size-[13px] appearance-none border border-[#333] bg-white";
  const row = (name: string, checked: boolean) => (
    <label className="flex h-4 flex-1 items-center">
      <span className="grid shrink-0 place-items-center">
        <input type="checkbox" defaultChecked={checked} className={box} />
        {checked && (
          <svg viewBox="0 0 11 9" className="pointer-events-none col-start-1 row-start-1 h-[9px] w-[11px]" fill="none" stroke="#333" strokeWidth="1.200">
            <path d="M.8 4.200 4 7.400 10.200 1" />
          </svg>
        )}
      </span>
      <span className="ml-[2px]"><MemberBall /></span>
      <span className={clsx("ml-[5px] h-4 flex-1 pl-[2px] leading-4 whitespace-nowrap", checked && "bg-[#0078d7] text-white")}>{name}</span>
    </label>
  );
  return (
    <div className="absolute top-[335px] left-[1215px] z-10 w-[170px] border border-[#1c80cc] bg-[#f0f0f0] text-black">
      <div className="h-[7px] bg-white" />
      <div className="mt-2 mr-2 ml-2 h-[194px] border border-[#646464] bg-white pl-[7px]">
        <div className="flex items-center gap-[7px] pt-px">
          <Expander open label="Collapse All Sales Territory" />
          {row("All Sales Territory", false)}
        </div>
        {members.map((m) => (
          <div key={m} className="flex pl-[34px]">{row(m, m === "North America")}</div>
        ))}
      </div>
      <div className="flex gap-[10px] pt-px pb-[10px] pl-px">
        <button className="h-[21px] w-[74px] border border-[#0078d7] bg-[#e5f1fb]">OK</button>
        <DialogButton className="w-[74px]">Cancel</DialogButton>
      </div>
      <svg viewBox="0 0 9 9" className="absolute right-[2px] bottom-[2px] size-[9px]" fill="#bfbfbf">
        <path d="M6 0h2v2H6zM6 3h2v2H6zM3 3h2v2H3zM6 6h2v2H6zM3 6h2v2H3zM0 6h2v2H0z" />
      </svg>
    </div>
  );
}

/* ---------- page data ---------- */

const channelTree: Node[] = [
  { text: "Sales", level: 0, kind: "cube" },
  { text: "Measures", level: 1, kind: "measures" },
  { text: "KPIs", level: 1, kind: "kpi" },
  { text: "Channel", level: 1, kind: "dim", open: true },
  { text: "Channel Description", level: 2, kind: "attr" },
  { text: "Channel Label", level: 2, kind: "attr" },
  { text: "Channel Name", level: 2, kind: "attr" },
  { text: "Currency", level: 1, kind: "dim" },
  { text: "Date", level: 1, kind: "dim" },
  { text: "Employee", level: 1, kind: "dim" },
  { text: "Entity", level: 1, kind: "dim" },
];

const territoryTree: Node[] = [
  { text: "Product", level: 1, kind: "dim" },
  { text: "Promotion", level: 1, kind: "dim" },
  { text: "Sales Territory", level: 1, kind: "dim", open: true },
  { text: "Sales Territory Country", level: 2, kind: "attr" },
  { text: "Sales Territory Group", level: 2, kind: "attr" },
  { text: "Sales Territory Manager Name", level: 2, kind: "attr" },
  { text: "Sales Territory Name", level: 2, kind: "attr" },
  { text: "Sales Territory Region", level: 2, kind: "attr" },
  { text: "Territory Hierarchy", level: 2, kind: "hier" },
  { text: "Scenario", level: 1, kind: "dim" },
];

const channelRows: FilterRow[] = [
  { dim: "Channel", hier: "Channel Name", op: "Equal", expr: "{ Online, Reseller }", state: "soft" },
  { dim: "<Select dimension>" },
];

const territoryRows: FilterRow[] = [
  { dim: "Channel", hier: "Channel Name", op: "Equal", expr: "{ Online, Reseller }" },
  { dim: "Sales Territory", hier: "Sales Territory Group", op: "Equal", state: "selected" },
  { dim: "<Select dimension>" },
];

export default function App() {
  return (
    <div className="grid grid-cols-[848fr_159px_881fr_181px_1901fr] items-start bg-white pr-[43px] pl-[7px] font-['Noto_Sans',sans-serif] text-[11px] leading-4">
      <figure className="relative mt-[7px] pt-[15px] pr-1 pb-[2px] pl-2">
        <Backdrop ribbon="h-[15px]" lead="w-[6px]" />
        <div className="relative"><WizardDialog nodes={channelTree} rows={channelRows} /></div>
        <span className="absolute top-full left-[410px] h-1 w-[3px] border-r border-[#8a8a8a] bg-[#212121]" />
        <Annotation className="top-[301px] left-[325px]">Now please click '-' Icon of the "Channel" In Measure Group pane !</Annotation>
      </figure>

      <StepArrow className="mt-[489px] ml-[23px] text-black" />

      <figure className="relative mt-3 pt-[18px] pr-[34px] pb-[2px] pl-[11px]">
        <Backdrop ribbon="h-[18px]" lead="w-[9px]" />
        <div className="relative"><WizardDialog nodes={territoryTree} rows={channelRows} scrolled /></div>
        <span className="absolute top-full left-[412px] h-[18px] w-[3px] border-r border-[#8a8a8a] bg-[#212121]" />
        <div role="tooltip" className="absolute top-[373px] left-[133px] z-10 w-[228px] border border-[#767676] bg-white px-[5px] py-px leading-4 whitespace-nowrap text-[#575757]">
          <p>[Sales Territory].[Sales Territory Name]</p>
          <p>Attribute Hierarchy: Sales Territory Name</p>
        </div>
        <Annotation className="top-[459px] left-[126px]">Now please expand the Icon "Sales Territory" In Measure Group pane !</Annotation>
      </figure>

      <StepArrow className="mt-[529px] ml-[25px] text-[#ed1c24]" />

      <figure className="relative mt-14">
        <ReportBuilder />
        <div className="absolute top-[115px] left-[533px] w-[836px]">
          <WizardDialog nodes={territoryTree} rows={territoryRows} scrolled editing />
        </div>
        <MemberPopup />
        <div className="absolute top-[541px] left-[1210px] z-10 h-[38px] w-[89px] border-[5px] border-[#ed1c24]" />
        <Annotation className="top-[142px] left-[548px]">First drag Sales Territory Group to the Hierarchy column below Channel Name.</Annotation>
        <Annotation className="top-[205px] left-[554px] text-[#ed1c24]">
          Second click the blank cell in the column "Filter Expression" and Launch the following popup-menu !
        </Annotation>
        <Annotation className="top-[466px] left-[770px] text-[#ed1c24]">
          Expand "All Sales Territory" Icon , and then select the checkbox "North America"!
        </Annotation>
        <Annotation className="top-[499px] left-[770px] text-[#ed1c24]">Finally click the Button "OK" in the popup-menu!</Annotation>
      </figure>
    </div>
  );
}
